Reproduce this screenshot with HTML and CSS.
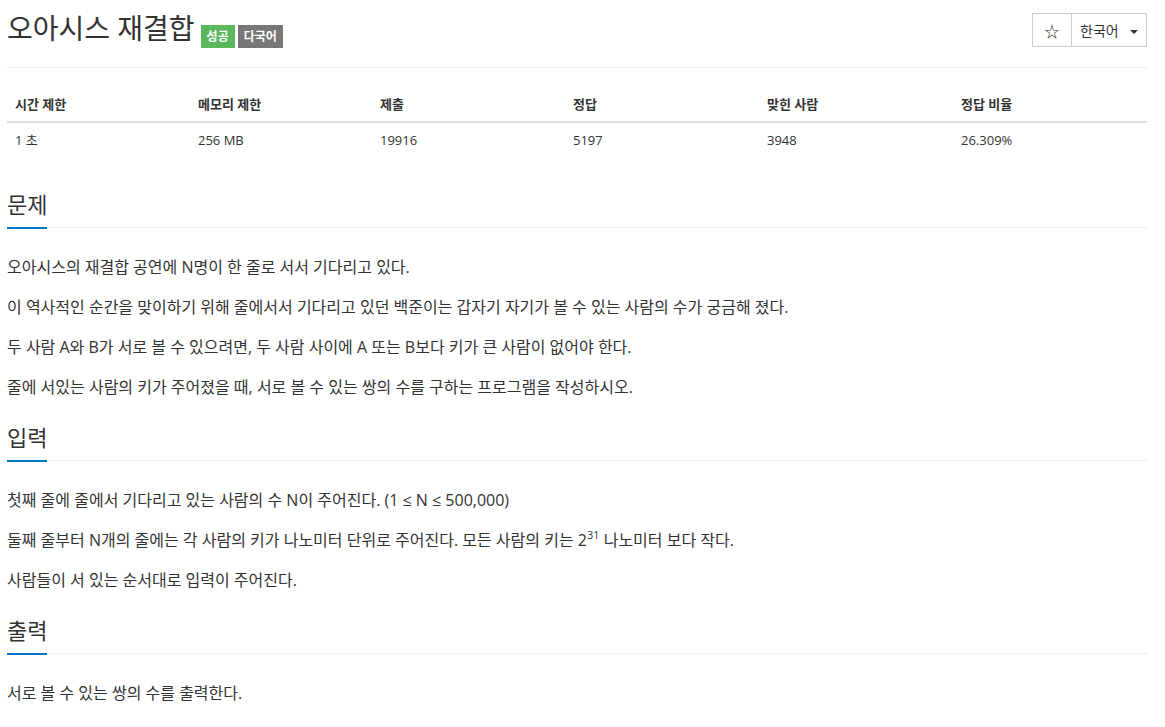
FILE: index.html
```html
<!DOCTYPE html>
<html lang="ko">
<head>
    <meta charset="UTF-8">
    <title>오아시스 재결합</title>
    <link rel="stylesheet" href="styles.css">
</head>
<body>

<div class="container">
    <div class="page-header">
        <h1 class="problem-title">
            <span id="problem_title">오아시스 재결합</span>
            <span class="label label-success">성공</span>
            <span class="label label-default">다국어</span>
        </h1>
        <div class="btn-group">
            <button class="btn btn-star">&#9734;</button>
            <button class="btn btn-lang">한국어 <span class="caret"></span></button>
        </div>
    </div>

    <table class="problem-info">
        <thead>
            <tr>
                <th>시간 제한</th>
                <th>메모리 제한</th>
                <th>제출</th>
                <th>정답</th>
                <th>맞힌 사람</th>
                <th>정답 비율</th>
            </tr>
        </thead>
        <tbody>
            <tr>
                <td>1 초</td>
                <td>256 MB</td>
                <td>19916</td>
                <td>5197</td>
                <td>3948</td>
                <td>26.309%</td>
            </tr>
        </tbody>
    </table>

    <section class="problem-section">
        <div class="headline"><h2>문제</h2></div>
        <div class="problem-text">
            <p>오아시스의 재결합 공연에 N명이 한 줄로 서서 기다리고 있다.</p>
            <p>이 역사적인 순간을 맞이하기 위해 줄에서서 기다리고 있던 백준이는 갑자기 자기가 볼 수 있는 사람의 수가 궁금해 졌다.</p>
            <p>두 사람 A와 B가 서로 볼 수 있으려면, 두 사람 사이에 A 또는 B보다 키가 큰 사람이 없어야 한다.</p>
            <p>줄에 서있는 사람의 키가 주어졌을 때, 서로 볼 수 있는 쌍의 수를 구하는 프로그램을 작성하시오.</p>
        </div>
    </section>

    <section class="problem-section">
        <div class="headline"><h2>입력</h2></div>
        <div class="problem-text">
            <p>첫째 줄에 줄에서 기다리고 있는 사람의 수 N이 주어진다. (1 &le; N &le; 500,000)</p>
            <p>둘째 줄부터 N개의 줄에는 각 사람의 키가 나노미터 단위로 주어진다. 모든 사람의 키는 2<sup>31</sup> 나노미터 보다 작다.</p>
            <p>사람들이 서 있는 순서대로 입력이 주어진다.</p>
        </div>
    </section>

    <section class="problem-section">
        <div class="headline"><h2>출력</h2></div>
        <div class="problem-text">
            <p>서로 볼 수 있는 쌍의 수를 출력한다.</p>
        </div>
    </section>
</div>

</body>
</html>
```

FILE: styles.css
```css
body { margin: 0; background: #fff; color: #333; font-family: "Open Sans", "Noto Sans CJK KR", sans-serif; font-size: 14px; }
.container { width: 1140px; margin-left: 7px; }

.page-header { display: flex; justify-content: space-between; align-items: flex-start; height: 67px; border-bottom: 1px solid #eee; }
.problem-title { display: flex; align-items: flex-start; margin: 10px 0 0; font-size: 28px; font-weight: normal; line-height: 36px; color: #333; }
.problem-title #problem_title { margin-right: 6px; }
.label { display: inline-block; margin: 15px 3px 0 0; padding: 0 6px; height: 23px; line-height: 23px; font-size: 12px; font-weight: bold; color: #fff; }
.label-success { background: #5cb85c; }
.label-default { background: #777; }

.btn-group { display: flex; margin-top: 13px; }
.btn { height: 34px; padding: 0 12px; background: #fff; border: 1px solid #ccc; font-family: inherit; font-size: 14px; color: #333; cursor: pointer; }
.btn-star { width: 40px; padding: 0; font-size: 15px; }
.btn-lang { width: 76px; margin-left: -1px; padding: 0 0 0 8px; text-align: left; }
.caret { display: inline-block; margin-left: 8px; width: 0; height: 0; vertical-align: middle; border-top: 4px solid #333; border-left: 4px solid transparent; border-right: 4px solid transparent; }

.problem-info { width: 100%; margin: 19px 0 32px; border-collapse: collapse; table-layout: fixed; font-size: 13px; }
.problem-info th, .problem-info td { padding: 8px; line-height: 18px; text-align: left; }
.problem-info th { border-bottom: 2px solid #ddd; font-weight: bold; }
.problem-info th:nth-child(1) { width: 167px; }
.problem-info th:nth-child(2) { width: 166px; }
.problem-info th:nth-child(3) { width: 177px; }
.problem-info th:nth-child(4) { width: 178px; }
.problem-info th:nth-child(5) { width: 178px; }

.problem-section { margin-top: 20px; }
.problem-section:first-of-type { margin-top: 0; }
.headline { border-bottom: 1px dotted #ddd; }
.headline h2 { display: inline-block; margin: 0 0 -2px; padding-bottom: 8px; font-size: 22px; font-weight: normal; line-height: 30px; border-bottom: 2px solid #0076c0; }
.problem-text { padding-top: 24px; }
.problem-text p { margin: 0 0 10px; font-size: 16px; line-height: 30px; }
.problem-text sup { font-size: 11px; line-height: 0; vertical-align: 7px; }
```
